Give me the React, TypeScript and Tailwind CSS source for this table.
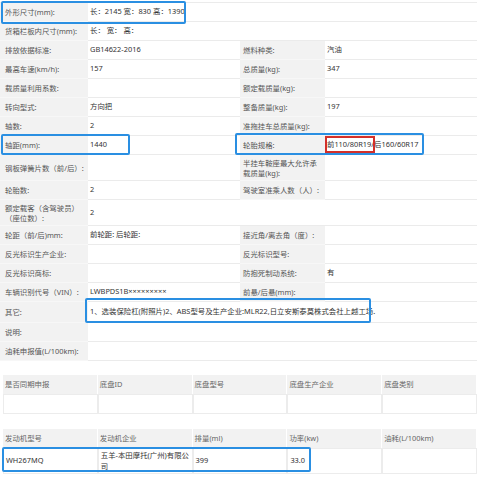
import React from "react";

type RowProps = {
  label: React.ReactNode;
  value?: React.ReactNode;
  rlabel?: React.ReactNode;
  rvalue?: React.ReactNode;
  mode?: "pair" | "blank" | "span";
  h?: string;
};

const Row = ({ label, value, rlabel, rvalue, mode = "pair", h = "h-[19px]" }: RowProps) => (
  <div className={`flex ${h}`}>
    <div className="w-[88px] shrink-0 bg-[#f2f2f2] border-b border-[#f7f7f7] flex items-center pl-[5px] pr-[1px] text-[#555] leading-[10px]">
      {label}
    </div>
    {mode === "span" ? (
      <div className="flex-1 border-b border-[#ebebeb] flex items-center pl-[2px] text-[#333]">{value}</div>
    ) : (
      <>
        <div className="w-[152px] shrink-0 border-b border-[#ebebeb] flex items-center pl-[2px] text-[#333]">{value}</div>
        {mode === "pair" ? (
          <>
            <div className="w-[85px] shrink-0 bg-[#f2f2f2] border-b border-[#f7f7f7] flex items-center pl-[3px] pr-[1px] text-[#555] leading-[10px]">
              {rlabel}
            </div>
            <div className="flex-1 border-b border-[#ebebeb] flex items-center pl-[2px] text-[#333]">{rvalue}</div>
          </>
        ) : (
          <div className="flex-1 border-b border-[#ebebeb]" />
        )}
      </>
    )}
  </div>
);

const Box = ({ cls }: { cls: string }) => (
  <div className={`absolute border-2 border-[#2a8fe2] rounded-[2px] pointer-events-none ${cls}`} />
);

export default function App() {
  const th = "bg-[#f2f2f2] flex items-center pl-[2px] text-[#666] border-r border-white";
  const td = "flex items-center pl-[2px] text-[#333] border border-[#ececec]";
  return (
    <div
      className="relative w-[480px] h-[477px] bg-white overflow-hidden text-[7.4px]"
      style={{ fontFamily: '"Noto Sans", "Noto Sans CJK SC", sans-serif' }}
    >
      <div className="mt-[2px] w-[477px] border-t border-[#ebebeb]">
        <Row label="外形尺寸(mm):" value="长：2145 宽：830 高：1390" mode="blank" />
        <Row label="货箱栏板内尺寸(mm):" value="长：  宽：  高：" mode="blank" />
        <Row label="排放依据标准:" value="GB14622-2016" rlabel="燃料种类:" rvalue="汽油" />
        <Row label="最高车速(km/h):" value="157" rlabel="总质量(kg):" rvalue="347" />
        <Row label="载质量利用系数:" value="" rlabel="额定载质量(kg):" rvalue="" />
        <Row label="转向型式:" value="方向把" rlabel="整备质量(kg):" rvalue="197" />
        <Row label="轴数:" value="2" rlabel="准拖挂车总质量(kg):" rvalue="" />
        <Row label="轴距(mm):" value="1440" rlabel="轮胎规格:" rvalue="前110/80R19/后160/60R17" />
        <Row
          label="钢板弹簧片数（前/后）:"
          value=""
          rlabel="半挂车鞍座最大允许承载质量(kg):"
          rvalue=""
          h="h-[26px]"
        />
        <Row label="轮胎数:" value="2" rlabel="驾驶室准乘人数（人）:" rvalue="" />
        <Row
          label={
            <span>
              额定载客（含驾驶员）
              <br />
              （座位数）:
            </span>
          }
          value="2"
          mode="blank"
          h="h-[26px]"
        />
        <Row label="轮距（前/后)mm:" value="前轮距: 后轮距:" rlabel="接近角/离去角（度）:" rvalue="" />
        <Row label="反光标识生产企业:" value="" rlabel="反光标识型号:" rvalue="" />
        <Row label="反光标识商标:" value="" rlabel="防抱死制动系统:" rvalue="有" />
        <Row label="车辆识别代号（VIN）:" value="LWBPDS1B×××××××××" rlabel="前悬/后悬(mm):" rvalue="" />
        <Row
          label="其它:"
          value="1、选装保险杠(附照片)2、ABS型号及生产企业:MLR22,日立安斯泰莫株式会社上越工场."
          mode="span"
          h="h-[21px]"
        />
        <Row label="说明:" value="" mode="span" />
        <Row label="油耗申报值(L/100km):" value="" mode="span" />
      </div>

      <div className="ml-[3px] mt-[14px] w-[474px]">
        <div className="grid grid-cols-5 h-[19px]">
          <div className={th}>是否同期申报</div>
          <div className={th}>底盘ID</div>
          <div className={th}>底盘型号</div>
          <div className={th}>底盘生产企业</div>
          <div className={th}>底盘类别</div>
        </div>
        <div className="grid grid-cols-5 h-[20px]">
          <div className={td} />
          <div className={td} />
          <div className={td} />
          <div className={td} />
          <div className={td} />
        </div>
      </div>

      <div className="ml-[3px] mt-[15px] w-[474px]">
        <div className="grid grid-cols-5 h-[19px]">
          <div className={th}>发动机型号</div>
          <div className={th}>发动机企业</div>
          <div className={th}>排量(ml)</div>
          <div className={th}>功率(kw)</div>
          <div className={th}>油耗(L/100km)</div>
        </div>
        <div className="grid grid-cols-5 h-[26px]">
          <div className={td}>WH267MQ</div>
          <div className={`${td} leading-[11px] pr-[2px]`}>五羊-本田摩托(广州)有限公司</div>
          <div className={td}>399</div>
          <div className={td}>33.0</div>
          <div className={td} />
        </div>
      </div>

      <Box cls="left-[1px] top-[1px] w-[185px] h-[23px]" />
      <Box cls="left-[1px] top-[134px] w-[129px] h-[21px]" />
      <Box cls="left-[235px] top-[133px] w-[189px] h-[22px]" />
      <div className="absolute left-[325px] top-[136px] w-[50px] h-[17px] border-2 border-[#d3302a] pointer-events-none" />
      <Box cls="left-[85px] top-[298px] w-[286px] h-[25px]" />
      <Box cls="left-[2px] top-[447px] w-[309px] h-[25px]" />
    </div>
  );
}
